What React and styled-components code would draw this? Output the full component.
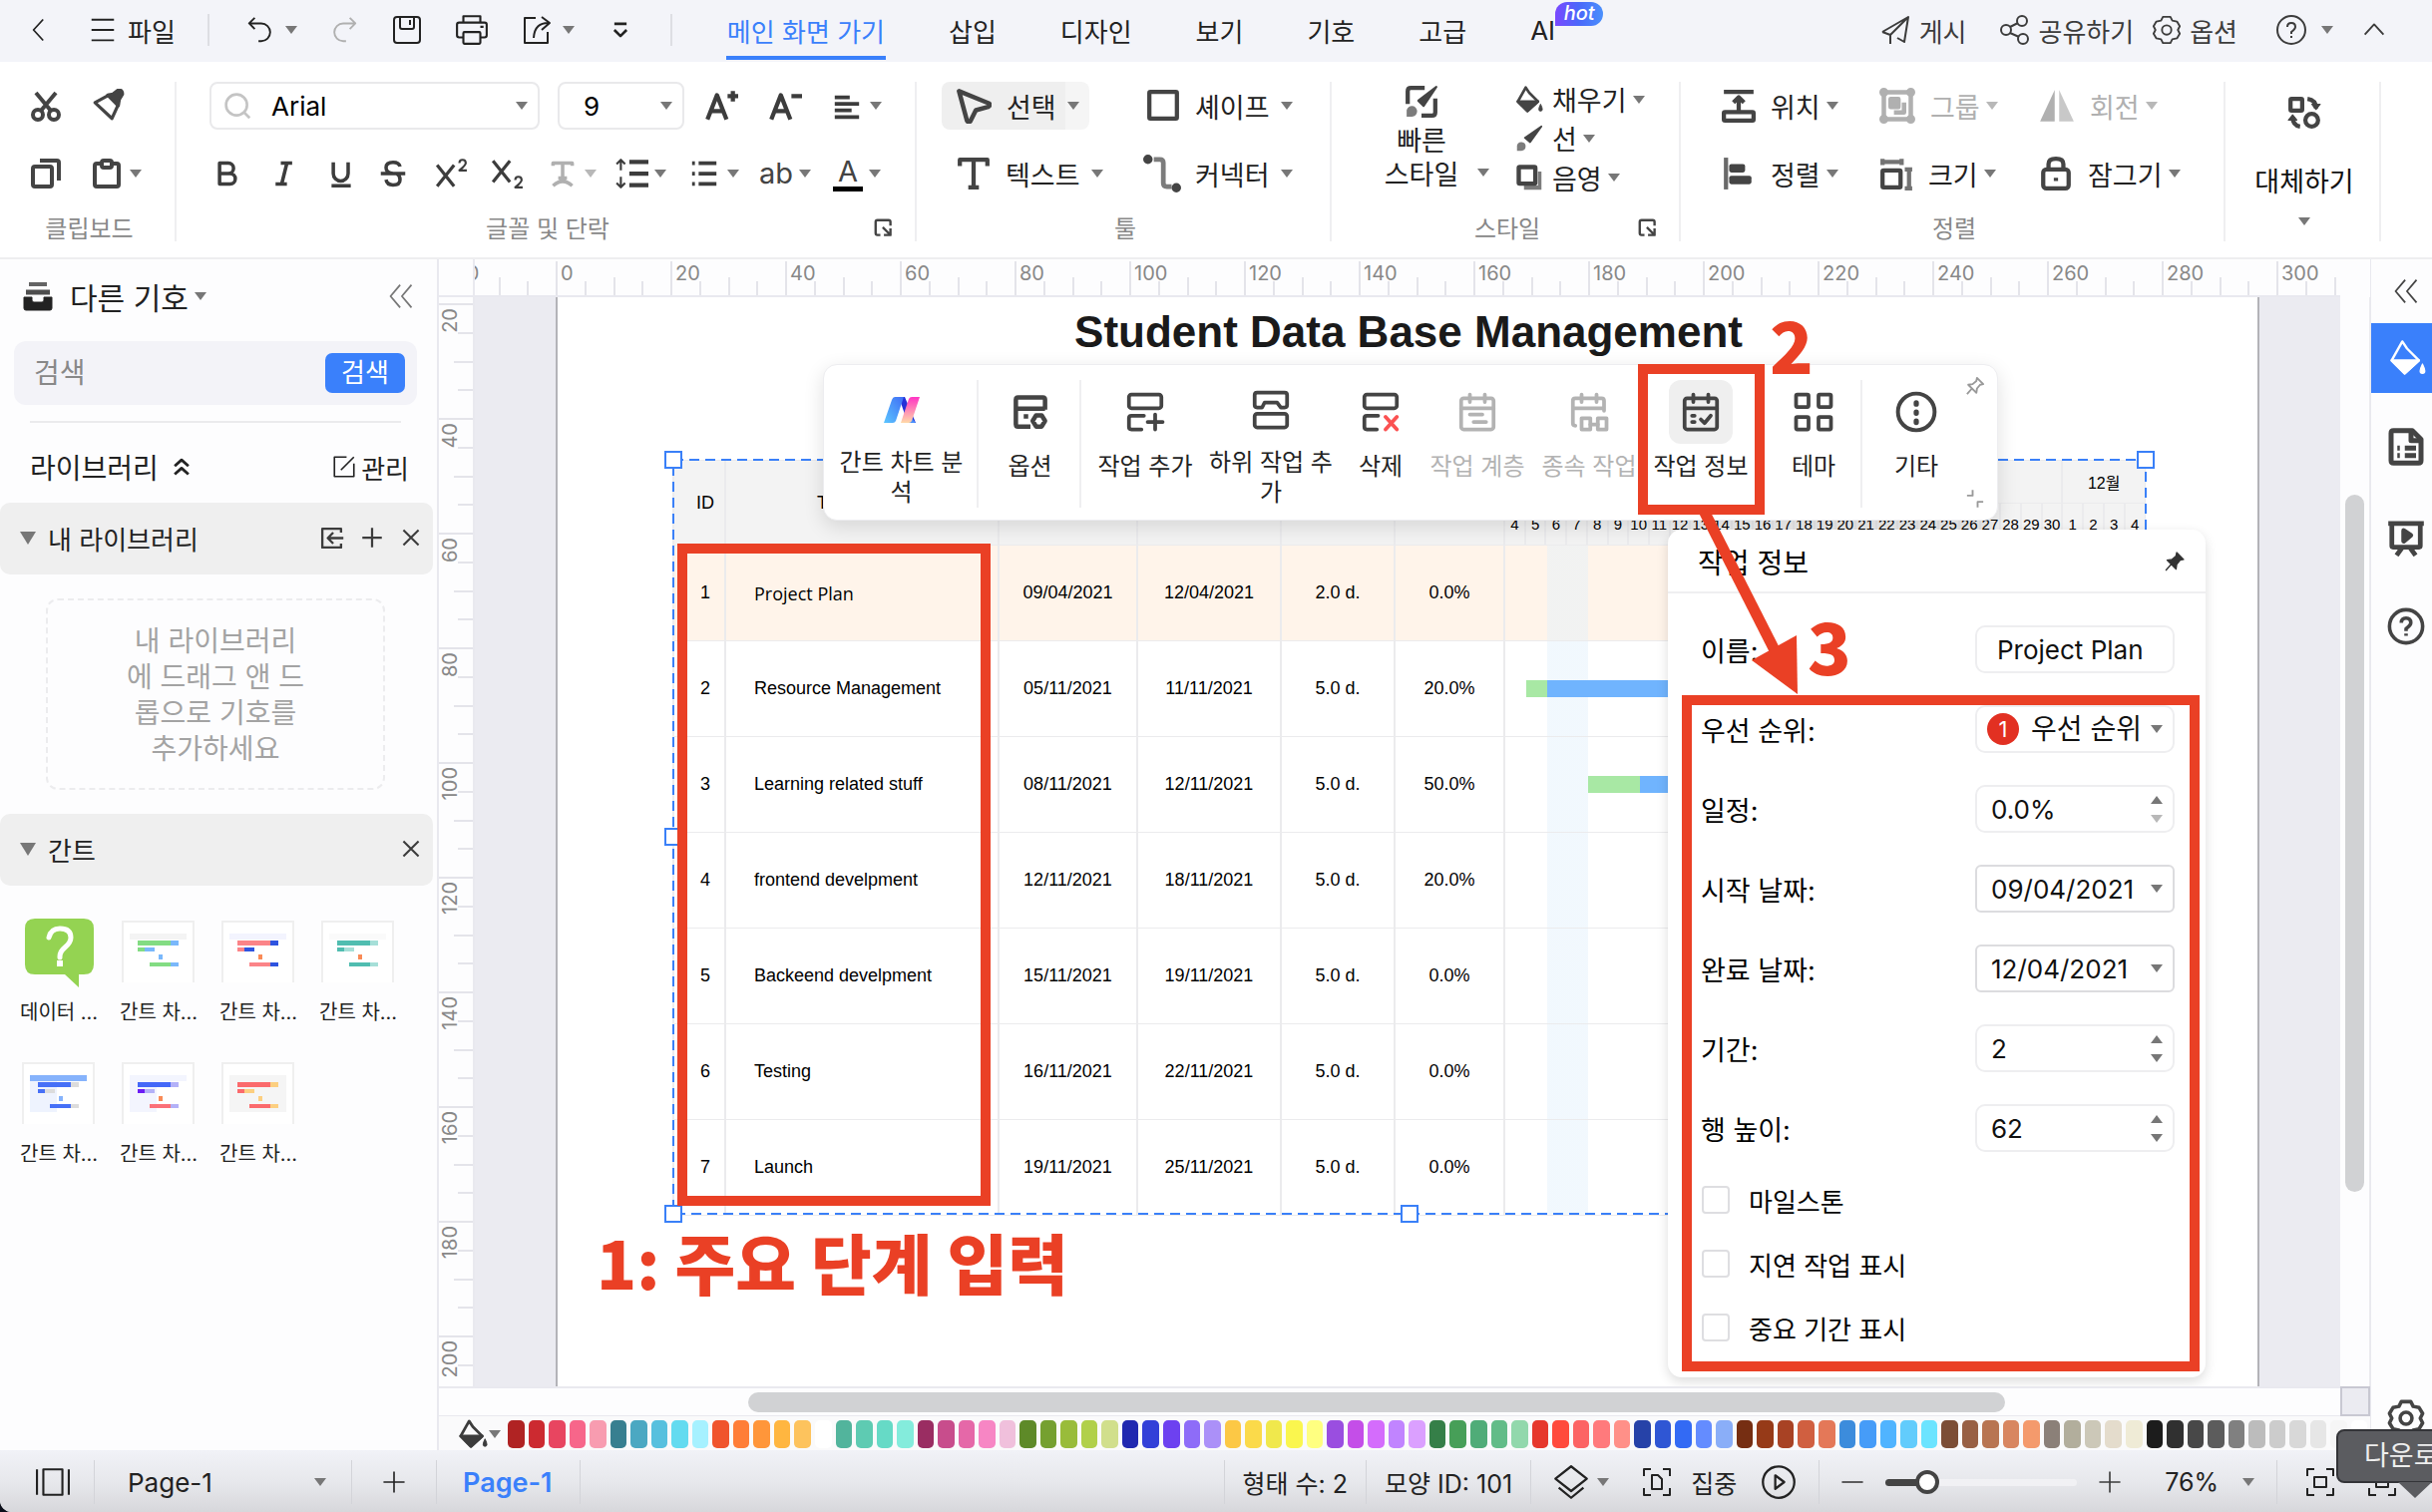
import React, { useState } from "react";
import styled, { createGlobalStyle, css } from "styled-components";

const GlobalStyle = createGlobalStyle`
  * {
    box-sizing: border-box;
  }

  body {
    margin: 0;
    background-color: #0c0e1a;
    font-family: Inter, "Noto Sans CJK KR", sans-serif;
    color: #222;
    overflow: hidden;
  }

  button, input, select {
    margin: 0;
    padding: 0;
    border: none;
    background: none;
    font: inherit;
    color: inherit;
    outline: none;
  }

  select {
    appearance: none;
  }
`;

/* ---------- icons ---------- */

const IconSvg = styled.svg`
  display: block;
  flex: none;
  fill: none;
  stroke: currentColor;
  stroke-linejoin: round;
`;

const iconShapes = {
  back: <path d="M22 4 11 16l11 12" />,
  menu: <path d="M4 5h24M4 16h24M4 27h24" />,
  undo: <path d="M10 3 4 9l6 6M4 9h13a9 9 0 0 1 0 19h-3" />,
  redo: <path d="m22 3 6 6-6 6M28 9H15a9 9 0 0 0 0 19h3" />,
  save: (
    <>
      <rect x="3" y="3" width="26" height="26" rx="3" />
      <path d="M9 3v10q0 2 2 2h10q2 0 2-2V3M19 6v5" />
    </>
  ),
  print: (
    <>
      <path d="M8 9V3h16v6M8 23H4q-2 0-2-2V11q0-2 2-2h24q2 0 2 2v10q0 2-2 2h-4M24 13h3" />
      <rect x="8" y="18" width="16" height="11" rx="1" />
    </>
  ),
  exportTo: <path d="M15 4H4v25h23V18M21 3l8 6-8 7M29 9q-15-1-16 15" />,
  more: <path d="M9 9h14M9 16l7 7 7-7" />,
  send: <path d="M3 18 29 3l-4 25-7-4M3 18l8 3L29 3M11 21v9" />,
  share: (
    <>
      <circle cx="8" cy="16" r="5" />
      <circle cx="24" cy="7" r="5" />
      <circle cx="25" cy="25" r="5" />
      <path d="m12 13 8-4M12 19l9 4" />
    </>
  ),
  gear: (
    <>
      <path d="M12 2h8l2 4 5 1 3 5-2 4 2 4-3 5-5 1-2 4h-8l-2-4-5-1-3-5 2-4-2-4 3-5 5-1z" />
      <circle cx="16" cy="16" r="5" />
    </>
  ),
  help: (
    <>
      <circle cx="16" cy="16" r="14" />
      <path d="M12 13q0-4 4-4t4 4q0 2-4 5v2M16 22v2" />
    </>
  ),
  up: <path d="m6 21 10-11 10 11" />,
  cut: (
    <>
      <circle cx="8" cy="25" r="5" />
      <circle cx="24" cy="25" r="5" />
      <path d="M11 21 26 3M21 21 6 3" />
    </>
  ),
  painter: (
    <>
      <path d="M3 13 16 6l9 9-6 13z" />
      <path d="m15 6 5-1 5-4q4 0 4 4l-3 5-1 6z" fill="currentColor" />
    </>
  ),
  copy: (
    <>
      <rect x="3" y="9" width="19" height="20" rx="2" />
      <path d="M10 3h17q2 0 2 2v18" />
    </>
  ),
  paste: (
    <>
      <path d="M10 6H5q-2 0-2 2v19q0 2 2 2h20q2 0 2-2V8q0-2-2-2h-5" />
      <rect x="10" y="3" width="10" height="7" rx="2" />
    </>
  ),
  search: (
    <>
      <circle cx="15" cy="15" r="12" />
      <path d="m24 24 6 6" />
    </>
  ),
  fontUp: <path d="m3 29 9-23 9 23M6 21h12M27 2v10M22 7h10" />,
  fontDown: <path d="m3 29 9-23 9 23M6 21h12M22 7h10" />,
  alignText: <path d="M3 7h16M3 14h26M3 21h18M3 28h26" />,
  bold: <path d="M7 4h10a6 6 0 0 1 0 12H7zM7 16h12a6 6 0 0 1 0 12H7z" />,
  italic: <path d="M12 4h13M6 28h13M19 4l-6 24" />,
  underline: <path d="M7 3v13a8 8 0 0 0 17 0V3M5 30h22" />,
  strike: <path d="M2 16h28M24 8q-1-5-8-5-8 0-8 6t8 7M8 23q1 6 8 6 8 0 8-6 0-5-4-7" />,
  sup: (
    <>
      <path d="m3 8 16 20M19 8 3 28" />
      <path d="M24 6q0-3 3-3t3 3q0 2-6 7h7" strokeWidth="2" />
    </>
  ),
  sub: (
    <>
      <path d="m3 4 16 20M19 4 3 24" />
      <path d="M24 22q0-3 3-3t3 3q0 2-6 7h7" strokeWidth="2" />
    </>
  ),
  textPath: <path d="M5 7V4h22v3M16 4v17M11 21h10M5 30q11-10 22 0" />,
  lineSpace: (
    <>
      <path d="M6 3v10M2 7l4-4 4 4M6 19v10M2 25l4 4 4-4" strokeWidth="2" />
      <path d="M14 5h18M14 16h18M14 27h18" />
    </>
  ),
  list: <path d="M3 5h3M3 16h3M3 27h3M10 5h19M10 16h19M10 27h19" />,
  launcher: <path d="M11 28H6q-3 0-3-3V6q0-3 3-3h19q3 0 3 3v6M15 15l12 12M28 17v11H17" />,
  pointer: <path d="M3 3 30 14q1 2-1 3l-11 3-5 10q-2 1-3-1z" />,
  text: <path d="M3 9V3h26v6M16 3v26M11 29h10" />,
  shape: <rect x="3" y="3" width="26" height="25" rx="1" />,
  connector: (
    <>
      <path d="M9 4h5q3 0 3 3v17q0 3 3 3h4" opacity="0.7" />
      <circle cx="4" cy="4" r="2" fill="currentColor" />
      <circle cx="28" cy="28" r="2" fill="currentColor" />
    </>
  ),
  quick: (
    <>
      <path d="M3 18V6q0-3 3-3h13M29 13v13q0 3-3 3H16" />
      <path d="M30 2 18 20l-5-5z" fill="currentColor" strokeWidth="2" />
      <path d="M2 30v-6a5 5 0 1 1 5 6z" fill="currentColor" stroke="none" opacity="0.7" />
    </>
  ),
  bucket: (
    <>
      <path d="m12 2 4 6 10 10-12 11L3 18z" />
      <path d="M3 18h23L14 29z" fill="currentColor" />
      <path d="M29 21q4 8 0 8t0-8z" fill="currentColor" strokeWidth="1" />
    </>
  ),
  brush: (
    <>
      <path d="M30 2 17 20l-6-5z" fill="currentColor" strokeWidth="2" />
      <path d="M2 30v-6a5 5 0 1 1 5 6z" fill="currentColor" stroke="none" opacity="0.7" />
    </>
  ),
  shadow: (
    <>
      <path d="M10 25v5h20V9h-4v16z" fill="currentColor" stroke="none" opacity="0.7" />
      <rect x="4" y="4" width="19" height="19" rx="1" />
    </>
  ),
  position: (
    <>
      <path d="M2 3h28M16 21V8M11 13l5-5 5 5" />
      <rect x="2" y="22" width="28" height="8" rx="1" />
    </>
  ),
  group: (
    <>
      <rect x="4" y="4" width="24" height="24" />
      <circle cx="4" cy="4" r="2" fill="#fff" />
      <circle cx="28" cy="4" r="2" fill="#fff" />
      <circle cx="4" cy="28" r="2" fill="#fff" />
      <circle cx="28" cy="28" r="2" fill="#fff" />
      <rect x="10" y="10" width="7" height="7" fill="currentColor" />
      <path d="M22 13v9h-9" />
    </>
  ),
  flip: (
    <>
      <path d="M14 2v28H1z" fill="currentColor" stroke="none" />
      <path d="M18 2v28h13z" fill="currentColor" stroke="none" opacity="0.7" />
    </>
  ),
  alignObj: (
    <>
      <path d="M4 1v30" opacity="0.8" />
      <rect x="9" y="9" width="11" height="4" fill="currentColor" />
      <rect x="9" y="20" width="17" height="4" fill="currentColor" />
    </>
  ),
  size: (
    <>
      <rect x="3" y="13" width="17" height="16" rx="1" />
      <path d="M3 2v6M21 2v6M3 5h18M24 12h7M24 30h7M28 12v18" opacity="0.75" />
    </>
  ),
  lock: (
    <>
      <rect x="4" y="12" width="24" height="18" rx="3" />
      <path d="M9 12V7q0-5 7-5t7 5v5M16 20v3" />
    </>
  ),
  replace: (
    <>
      <rect x="3" y="3" width="11" height="11" rx="1" />
      <circle cx="23" cy="23" r="6" />
      <path d="M19 3q8 1 8 9M5 20q0 8 7 9" />
      <path d="m23 8 4 5 4-5zM1 23l4-5 4 5z" fill="currentColor" strokeWidth="1" />
    </>
  ),
  library: (
    <>
      <path d="M7 4h18" opacity="0.7" strokeWidth="4" />
      <path d="M4 12h24" opacity="0.8" strokeWidth="5" />
      <path d="M2 17h8v3q0 2 2 2h8q2 0 2-2v-3h8v11q0 2-2 2H4q-2 0-2-2z" fill="currentColor" strokeWidth="1" />
    </>
  ),
  collapse: <path d="M15 3 4 16l11 13M28 3 17 16l11 13" />,
  doubleUp: <path d="m6 15 10-9 10 9M6 27l10-9 10 9" />,
  edit: <path d="M19 4H4v24h24V12M12 20 28 4" />,
  importTo: <path d="M28 9V4H4v24h24v-5M31 16H12M18 9l-7 7 7 7" />,
  plus: <path d="M16 3v26M3 16h26" />,
  minus: <path d="M3 16h26" />,
  close: <path d="m5 5 22 22M27 5 5 27" />,
  ganttOption: (
    <>
      <path d="M29 14V5q0-2-2-2H5Q3 3 3 5v22q0 2 2 2h11M3 13h26M10 20h4" />
      <path d="m21 19-3 5 3 5h5l3-5-3-5z" />
    </>
  ),
  taskAdd: (
    <>
      <rect x="3" y="2" width="26" height="11" rx="2" />
      <path d="M15 19H5q-2 0-2 2v7q0 2 2 2h8M24 18v12M18 24h12" />
    </>
  ),
  taskSub: (
    <>
      <path d="M9 14H5q-2 0-2-2V4q0-2 2-2h22q2 0 2 2v8q0 2-2 2h-3l-3-4H11z" />
      <rect x="3" y="19" width="26" height="11" rx="2" />
    </>
  ),
  taskDelete: (
    <>
      <rect x="3" y="2" width="26" height="11" rx="2" />
      <path d="M14 19H5q-2 0-2 2v7q0 2 2 2h8" />
      <path d="m20 20 9 10M29 20l-9 10" stroke="#fb5252" />
    </>
  ),
  calendar: (
    <>
      <rect x="3" y="5" width="26" height="25" rx="2" />
      <path d="M3 13h26M10 2v6M22 2v6M10 18h10M13 24h10" />
    </>
  ),
  calendarLink: (
    <>
      <path d="M28 15V7q0-2-2-2H5Q3 5 3 7v18q0 2 2 2M3 13h25M10 2v6M22 2v6" />
      <rect x="10" y="21" width="7" height="9" />
      <rect x="23" y="21" width="7" height="9" />
      <path d="M17 26h6" />
    </>
  ),
  calendarCheck: (
    <>
      <rect x="3" y="5" width="26" height="25" rx="2" />
      <path d="M3 13h26M10 2v6M22 2v6M9 19h2M9 24h2M16 22l3 3 5-6" />
    </>
  ),
  theme: (
    <>
      <rect x="2" y="2" width="10" height="10" rx="1" />
      <rect x="20" y="2" width="10" height="10" rx="1" />
      <rect x="2" y="20" width="10" height="10" rx="1" />
      <rect x="20" y="20" width="10" height="10" rx="1" />
    </>
  ),
  etc: (
    <>
      <circle cx="16" cy="16" r="14" />
      <path d="M16 9v1M16 16v1M16 23v1" strokeWidth="4" />
    </>
  ),
  pin: <path d="m19 3 10 10-5 1-5 6-1 7L5 14l7-1 6-5zM11 20 3 29" />,
  pinSolid: <path d="m19 3 10 10-5 1-5 6-1 7L5 14l7-1 6-5zM11 20 3 29" fill="currentColor" />,
  corners: <path d="M3 11h9V2M20 30v-9h9" />,
  note: (
    <>
      <path d="M21 3H6Q4 3 4 5v22q0 2 2 2h20q2 0 2-2V10z" />
      <path d="M20 3v8h8M9 17h2M15 17h9M9 23h2M15 23h9" />
    </>
  ),
  board: (
    <>
      <path d="M1 4h30M4 4v19q0 1 1 1h22q1 0 1-1V4M13 24l-5 7M19 24l5 7" />
      <path d="m14 10 6 4-6 5z" fill="currentColor" />
    </>
  ),
  pageView: <path d="M7 4h18v24H7zM1 4v24M31 4v24" />,
  layers: <path d="m16 2 14 11-14 11L2 13zM5 21l11 9 11-9" />,
  focus: <path d="M10 3H3v7M22 3h7v7M10 29H3v-7M22 29h7v-7M11 9h6l4 4v10H11z" />,
  play: (
    <>
      <circle cx="16" cy="16" r="14" />
      <path d="m13 10 8 6-8 6z" />
    </>
  ),
  fit: (
    <>
      <path d="M10 3H3v7M22 3h7v7M10 29H3v-7M22 29h7v-7" />
      <rect x="10" y="11" width="12" height="10" />
    </>
  ),
};

const Icon = ({ name, size = 30, weight = 2, cap }) => (
  <IconSvg
    width={size}
    height={size}
    viewBox="0 0 32 32"
    strokeWidth={weight}
    strokeLinecap={cap}
    aria-hidden="true"
  >
    {iconShapes[name]}
  </IconSvg>
);

const Caret = styled.i`
  flex: none;
  width: 0;
  height: 0;
  border: 6px solid transparent;
  border-top: 8px solid #777;
  border-bottom: none;
`;

const Spacer = styled.div`
  flex: 1;
`;

/* ---------- window ---------- */

const Window = styled.div`
  display: flex;
  flex-direction: column;
  height: 100vh;
  overflow: hidden;
  background-color: #fdfdfe;
  border-bottom-left-radius: 12px;
`;

const IconButton = styled.button`
  display: flex;
  align-items: center;
  gap: ${({ $gap }) => $gap || 8}px;
  color: ${({ $color }) => $color || "#3c3c3c"};
  white-space: nowrap;

  ${({ disabled }) =>
    disabled &&
    css`
      color: #b0b0b0;

      ${Caret} {
        border-top-color: #b8b8b8;
      }
    `}
`;

/* ---------- top bar ---------- */

const TopBar = styled.header`
  display: flex;
  align-items: center;
  flex: none;
  height: 62px;
  padding: 0 43px 2px 24px;
  background-color: #f3f4f9;
  font-size: 26px;
`;

const Divider = styled.i`
  flex: none;
  width: 2px;
  height: ${({ $h }) => $h || 32}px;
  background-color: #dddee3;
`;

const FileTools = styled.div`
  display: flex;
  align-items: center;
  height: 32px;
  gap: 32px;
  padding: 0 36px 0 36px;
`;

const FileMenu = styled.div`
  display: flex;
  gap: 36px;
  padding-right: 32px;
`;

const Tabs = styled.nav`
  display: flex;
  gap: 62px;
  height: 60px;
  padding-left: 54px;
`;

const Tab = styled.a`
  position: relative;
  display: flex;
  align-items: center;
  height: 60px;
  padding: 0 1px;
  border-top: 4px solid transparent;
  border-bottom: 4px solid ${({ $on }) => ($on ? "#3a80fb" : "transparent")};
  color: ${({ $on }) => ($on ? "#3a80fb" : "#222")};
  text-decoration: none;
`;

const HotBadge = styled.span`
  position: absolute;
  left: 26px;
  top: -2px;
  width: 48px;
  height: 24px;
  border-radius: 12px 12px 12px 0;
  background: linear-gradient(90deg, #7a48ff, #4a68fa 50%, #4a90fc);
  color: #fff;
  font-size: 20px;
  font-style: italic;
  font-weight: 500;
  line-height: 23px;
  text-align: center;
`;

const TopActions = styled.div`
  display: flex;
  align-items: center;
  gap: 18px;

  > :first-child {
    margin-right: 14px;
  }

  > :nth-child(4) {
    margin-left: 20px;
    margin-right: 8px;
  }
`;

const tabs = ["메인 화면 가기", "삽입", "디자인", "보기", "기호", "고급"];

const Header = () => (
  <TopBar>
    <FileMenu>
      <IconButton aria-label="뒤로" $color="#222">
        <Icon name="back" size={28} />
      </IconButton>
      <IconButton $color="#222" $gap={10}>
        <Icon name="menu" size={30} />
        파일
      </IconButton>
    </FileMenu>
    <Divider />
    <FileTools>
      <IconButton aria-label="실행 취소" $color="#222" $gap={10}>
        <Icon name="undo" />
        <Caret />
      </IconButton>
      <IconButton aria-label="다시 실행" disabled>
        <Icon name="redo" />
      </IconButton>
      <IconButton aria-label="저장" $color="#222">
        <Icon name="save" size={32} />
      </IconButton>
      <IconButton aria-label="인쇄" $color="#222">
        <Icon name="print" size={34} />
      </IconButton>
      <IconButton aria-label="내보내기" $color="#222" $gap={10}>
        <Icon name="exportTo" size={32} />
        <Caret />
      </IconButton>
      <IconButton aria-label="더 보기" $color="#222">
        <Icon name="more" size={28} weight={3} />
      </IconButton>
    </FileTools>
    <Divider />
    <Tabs>
      {tabs.map((tab, i) => (
        <Tab key={tab} href="#" $on={i === 0}>
          {tab}
        </Tab>
      ))}
      <Tab href="#">
        AI<HotBadge>hot</HotBadge>
      </Tab>
    </Tabs>
    <Spacer />
    <TopActions>
      <IconButton>
        <Icon name="send" size={32} />
        게시
      </IconButton>
      <IconButton>
        <Icon name="share" size={32} />
        공유하기
      </IconButton>
      <IconButton>
        <Icon name="gear" size={30} />
        옵션
      </IconButton>
      <IconButton aria-label="도움말" $gap={14}>
        <Icon name="help" size={32} />
        <Caret />
      </IconButton>
      <IconButton aria-label="리본 접기">
        <Icon name="up" size={30} />
      </IconButton>
    </TopActions>
  </TopBar>
);

/* ---------- ribbon ---------- */

const RibbonBar = styled.section`
  display: flex;
  flex: none;
  height: 198px;
  padding-top: 20px;
  background-color: #fff;
  border-bottom: 2px solid #eeeef0;
`;

const Group = styled.div`
  display: flex;
  flex-direction: column;
  flex: none;
  width: ${({ $w }) => $w}px;
  height: 160px;
  border-right: 2px solid #efeff1;
`;

const GroupRows = styled.div`
  display: grid;
  grid-template-rows: 48px 48px;
  row-gap: 20px;
  grid-template-columns: ${({ $cols }) => $cols || "1fr"};
  padding-left: ${({ $pad }) => $pad}px;
  font-size: 27px;
`;

const GroupLabel = styled.div`
  position: relative;
  height: 44px;
  padding: 10px 0 0 4px;
  line-height: 44px;
  text-align: center;
  font-size: 24px;
  color: #888;
`;

const Launcher = styled.button`
  position: absolute;
  right: 22px;
  top: 21px;
  color: #444;
`;

const Tool = styled(IconButton)`
  justify-self: start;
  height: 48px;
  gap: ${({ $gap }) => $gap || 6}px;
  color: #222;
  padding: 0 ${({ $px }) => $px || 0}px;

  svg {
    color: #444;
  }

  ${({ disabled }) =>
    disabled &&
    css`
      color: #b0b0b0;

      svg {
        color: #b0b0b0;
      }
    `}

  ${({ $active }) =>
    $active &&
    css`
      padding-right: 10px;
      border-radius: 8px;
      background: linear-gradient(90deg, #efefef 124px, #f5f5f5 124px);
    `}
`;

const ToolLabel = styled.span`
  padding-left: ${({ $left }) => $left || 9}px;
`;

const FontRow = styled.div`
  display: flex;
  align-items: center;
  gap: 18px;
`;

const FormatRow = styled.div`
  display: grid;
  grid-template-columns: 57px 57px 52px 55px 56px 59px 66px 75px 70px 74px 60px;
  align-items: center;
  padding-left: 4px;
`;

const SelectBox = styled.label`
  display: flex;
  align-items: center;
  gap: 20px;
  width: ${({ $w }) => $w}px;
  height: 48px;
  padding: 0 10px ${({ $w }) => ($w > 200 ? "0 12px" : "0 24px")};
  border: 2px solid #e9e9eb;
  border-radius: 8px;
  font-size: 26px;
  color: #000;

  select {
    flex: 1;
    min-width: 0;
  }

  > svg {
    color: #c4c4c4;
  }
`;

const FontButton = styled(IconButton)`
  width: ${({ $w }) => $w || 46}px;
  padding-left: 2px;
`;

const Letters = styled.span`
  font-size: 29px;
  line-height: 32px;
  color: #444;
  ${({ $bar }) => $bar && "border-bottom: 5px solid #000; padding: 0 5px; line-height: 30px;"}
`;

const QuickStyle = styled.button`
  grid-row: 1 / 3;
  display: grid;
  grid-template-columns: 76px 12px;
  grid-template-rows: 40px 34px 34px;
  column-gap: 18px;
  align-items: center;
  align-content: start;
  justify-content: start;
  justify-items: center;
  color: #222;

  svg {
    color: #444;
  }

  span:nth-of-type(1) {
    grid-row: 2;
  }

  span:nth-of-type(2) {
    grid-row: 3;
  }

  ${Caret} {
    grid-row: 3;
    grid-column: 2;
  }
`;

const StyleList = styled.div`
  grid-row: 1 / 3;
  display: flex;
  flex-direction: column;
  margin-top: -2px;

  button {
    height: 40px;
  }
`;

const ReplaceButton = styled.button`
  display: flex;
  flex-direction: column;
  align-items: center;
  gap: 33px;
  padding: 14px 0 0 4px;
  font-size: 27px;
  color: #111;
  line-height: 40px;

  svg {
    color: #444;
  }

  ${Caret} {
    margin-top: -18px;
  }
`;

const Ribbon = () => (
  <RibbonBar>
    <Group $w={177}>
      <GroupRows $pad={30} $cols="62px 1fr">
        <Tool aria-label="잘라내기">
          <Icon name="cut" size={32} weight={4} />
        </Tool>
        <Tool aria-label="서식 복사">
          <Icon name="painter" size={34} weight={3} />
        </Tool>
        <Tool aria-label="복사">
          <Icon name="copy" size={32} weight={4} />
        </Tool>
        <Tool aria-label="붙여넣기">
          <Icon name="paste" size={32} weight={4} />
          <Caret />
        </Tool>
      </GroupRows>
      <GroupLabel>클립보드</GroupLabel>
    </Group>

    <Group $w={742}>
      <GroupRows $pad={33}>
        <FontRow>
          <SelectBox $w={331}>
            <Icon name="search" size={28} weight={3} />
            <select aria-label="글꼴">
              <option>Arial</option>
            </select>
            <Caret />
          </SelectBox>
          <SelectBox $w={127}>
            <select aria-label="글꼴 크기">
              <option>9</option>
            </select>
            <Caret />
          </SelectBox>
          <FontButton aria-label="글꼴 크게">
            <Icon name="fontUp" size={34} weight={4} />
          </FontButton>
          <FontButton aria-label="글꼴 작게">
            <Icon name="fontDown" size={34} weight={4} />
          </FontButton>
          <FontButton aria-label="맞춤" $w={60}>
            <Icon name="alignText" size={30} weight={4} />
            <Caret />
          </FontButton>
        </FontRow>
        <FormatRow>
          {["bold", "italic", "underline", "strike"].map((name) => (
            <IconButton key={name} aria-label={name}>
              <Icon name={name} size={28} weight={4} />
            </IconButton>
          ))}
          <IconButton aria-label="위 첨자">
            <Icon name="sup" size={34} weight={3} />
          </IconButton>
          <IconButton aria-label="아래 첨자">
            <Icon name="sub" size={34} weight={3} />
          </IconButton>
          <IconButton aria-label="곡선 텍스트" disabled>
            <Icon name="textPath" size={28} weight={4} />
            <Caret />
          </IconButton>
          <IconButton aria-label="줄 간격" $gap={6}>
            <Icon name="lineSpace" size={34} weight={4} />
            <Caret />
          </IconButton>
          <IconButton aria-label="목록">
            <Icon name="list" size={30} weight={4} />
            <Caret />
          </IconButton>
          <IconButton $gap={6}>
            <Letters>ab</Letters>
            <Caret />
          </IconButton>
          <IconButton $gap={6}>
            <Letters $bar>A</Letters>
            <Caret />
          </IconButton>
        </FormatRow>
      </GroupRows>
      <GroupLabel>
        글꼴 및 단락
        <Launcher aria-label="글꼴 설정">
          <Icon name="launcher" size={19} weight={4} />
        </Launcher>
      </GroupLabel>
    </Group>

    <Group $w={416}>
      <GroupRows $pad={25} $cols="190px 1fr">
        <Tool $px={14} $gap={11} $active>
          <Icon name="pointer" size={36} weight={4} />
          <ToolLabel $left={4}>선택</ToolLabel>
          <Caret />
        </Tool>
        <Tool $px={15} $gap={11}>
          <Icon name="shape" size={34} weight={4} />
          <ToolLabel $left={4}>셰이프</ToolLabel>
          <Caret />
        </Tool>
        <Tool $px={15} $gap={11}>
          <Icon name="text" size={34} weight={4} />
          <ToolLabel $left={4}>텍스트</ToolLabel>
          <Caret />
        </Tool>
        <Tool $px={12} $gap={11}>
          <Icon name="connector" size={38} weight={4} />
          <ToolLabel $left={3}>커넥터</ToolLabel>
          <Caret />
        </Tool>
      </GroupRows>
      <GroupLabel>툴</GroupLabel>
    </Group>

    <Group $w={350}>
      <GroupRows $pad={52} $cols="132px 1fr">
        <QuickStyle>
          <Icon name="quick" size={34} weight={4} />
          <span>빠른</span>
          <span>스타일</span>
          <Caret />
        </QuickStyle>
        <StyleList>
          <Tool>
            <Icon name="bucket" size={28} weight={3} />
            <ToolLabel $left={3}>채우기</ToolLabel>
            <Caret />
          </Tool>
          <Tool>
            <Icon name="brush" size={28} weight={3} />
            <ToolLabel $left={3}>선</ToolLabel>
            <Caret />
          </Tool>
          <Tool>
            <Icon name="shadow" size={28} weight={5} />
            <ToolLabel $left={3}>음영</ToolLabel>
            <Caret />
          </Tool>
        </StyleList>
      </GroupRows>
      <GroupLabel>
        스타일
        <Launcher aria-label="스타일 설정">
          <Icon name="launcher" size={19} weight={4} />
        </Launcher>
      </GroupLabel>
    </Group>

    <Group $w={546}>
      <GroupRows $pad={41} $cols="158px 160px 1fr">
        <Tool>
          <Icon name="position" size={34} weight={4} />
          <ToolLabel>위치</ToolLabel>
          <Caret />
        </Tool>
        <Tool disabled>
          <Icon name="group" size={36} weight={4} />
          <ToolLabel>그룹</ToolLabel>
          <Caret />
        </Tool>
        <Tool disabled>
          <Icon name="flip" size={36} />
          <ToolLabel>회전</ToolLabel>
          <Caret />
        </Tool>
        <Tool>
          <Icon name="alignObj" size={34} weight={4} />
          <ToolLabel>정렬</ToolLabel>
          <Caret />
        </Tool>
        <Tool>
          <Icon name="size" size={34} weight={4} />
          <ToolLabel>크기</ToolLabel>
          <Caret />
        </Tool>
        <Tool>
          <Icon name="lock" size={34} weight={4} />
          <ToolLabel>잠그기</ToolLabel>
          <Caret />
        </Tool>
      </GroupRows>
      <GroupLabel>정렬</GroupLabel>
    </Group>

    <Group $w={156}>
      <ReplaceButton>
        <Icon name="replace" size={34} weight={4} />
        대체하기
        <Caret />
      </ReplaceButton>
    </Group>
  </RibbonBar>
);

/* ---------- symbol panel ---------- */

const Main = styled.main`
  display: flex;
  flex: 1;
  min-height: 0;
`;

const SidePanel = styled.aside`
  flex: none;
  width: 440px;
  border-right: 2px solid #e9e9ef;
  background-color: #fdfdfe;
`;

const PanelHead = styled.div`
  display: flex;
  align-items: center;
  height: 74px;
  padding: 0 22px;
  font-size: 30px;
`;

const PanelTitle = styled(IconButton)`
  flex: 1;
  color: #222;
  gap: 6px;

  span {
    padding-left: 10px;
  }
`;

const SearchBox = styled.form`
  display: flex;
  align-items: center;
  height: 64px;
  margin: 8px 20px 0 14px;
  padding: 0 12px 0 20px;
  border-radius: 12px;
  background-color: #f3f3f8;

  input {
    flex: 1;
    min-width: 0;
    font-size: 28px;
  }

  input::placeholder {
    color: #888;
  }

  button {
    width: 80px;
    height: 40px;
    border-radius: 7px;
    background-color: #3a80fb;
    color: #fff;
    font-size: 26px;
    line-height: 38px;
  }
`;

const LibraryHead = styled.div`
  display: flex;
  align-items: center;
  justify-content: space-between;
  height: 82px;
  margin: 16px 36px 0 30px;
  padding-top: 8px;
  border-top: 2px solid #ebebed;
  font-size: 28px;

  button:last-child {
    margin-right: -8px;
    font-size: 26px;
  }
`;

const SectionBar = styled.div`
  display: flex;
  align-items: center;
  gap: 16px;
  height: 72px;
  margin-right: 4px;
  padding: 0 11px 2px 20px;
  border-radius: 10px;
  background-color: #efefef;
  font-size: 26px;
`;

const SectionName = styled.button`
  display: flex;
  align-items: center;
  gap: 12px;
  flex: 1;

  ${Caret} {
    border-width: 8px;
    border-top-width: 13px;
    border-bottom: none;
  }
`;

const DropHint = styled.p`
  display: flex;
  align-items: center;
  justify-content: center;
  height: 192px;
  margin: 24px 52px 24px 46px;
  padding: 2px 76px 0;
  border: 2px dashed #ececee;
  border-radius: 12px;
  color: #a3a3a3;
  font-size: 28px;
  line-height: 36px;
  text-align: center;
  word-break: break-all;
`;

const SymbolGrid = styled.div`
  display: grid;
  grid-template-columns: repeat(4, 76px);
  column-gap: 24px;
  row-gap: 42px;
  padding: 32px 20px;
`;

const Symbol = styled.figure`
  margin: 0;
  height: 100px;
  font-size: 20px;

  svg {
    display: block;
    width: 76px;
    height: 72px;
  }

  figcaption {
    height: 28px;
    line-height: 46px;
    white-space: nowrap;
  }
`;

const symbols = [
  null,
  { head: "#f4f4f4", done: "#83dc83", rest: "#7ab8fb", dot: "#7ab8fb" },
  { head: "#f3f4fe", done: "#fb8488", rest: "#2e54e0", dot: "#f98b57" },
  { head: "#fafafa", done: "#50bdb0", rest: "#a6dfd8", dot: "#f98b57" },
  { head: "#86b3fc", side: "#eef3fe", done: "#4670f7", rest: "#dcdcdc", dot: "#86b3fc" },
  { head: "#f3f5fe", side: "#f3f5fe", done: "#4468f8", rest: "#b3b1f8", alt: "#6c1cf5", last: "#fb7078", dot: "#f98b57" },
  { head: "#f5f5f5", side: "#f5f5f5", done: "#fb6a6c", rest: "#fccf80", dot: "#fccf80" },
];

const GanttThumb = ({ head, side, done, rest, alt, last, dot }) => (
  <svg viewBox="0 0 76 72" aria-hidden="true">
    <path d="M3 65V4h71v61" fill="#fff" stroke="#efefef" strokeWidth="2" />
    {side && <rect x="10" y="22" width={head === side && !alt ? 57 : 27} height="31" fill={side} />}
    <rect x="10" y="16" width="57" height="6" fill={head} />
    <rect x="18" y="23" width="33" height="5" fill={done} />
    <rect x="51" y="23" width="8" height="5" fill={rest} />
    <rect x="18" y="30" width="7" height="4" fill={alt || done} />
    <rect x="25" y="30" width="10" height="4" fill={rest} />
    <rect x="39" y="37" width="4" height="5" fill={dot} />
    <rect x="30" y="45" width="21" height="4" fill={last || done} />
    <rect x="51" y="45" width="8" height="4" fill={rest} />
  </svg>
);

const QuestionThumb = () => (
  <svg viewBox="0 0 76 72" aria-hidden="true">
    <path
      d="M15 1h49q10 0 10 10v36q0 10-10 10h-5v13L45 57H15Q5 57 5 47V11Q5 1 15 1z"
      fill="#94d352"
    />
    <path
      d="M29 20q2-9 11-9 11 0 11 9 0 5-6 10-5 4-5 9v1"
      fill="none"
      stroke="#fff"
      strokeWidth="5"
      strokeLinecap="round"
    />
    <rect x="37" y="43" width="6" height="6" fill="#fff" />
  </svg>
);

const SymbolPanel = () => (
  <SidePanel>
    <PanelHead>
      <PanelTitle>
        <Icon name="library" size={32} weight={3} />
        <span>다른 기호</span>
        <Caret />
      </PanelTitle>
      <IconButton aria-label="패널 접기" $color="#777">
        <Icon name="collapse" size={28} />
      </IconButton>
    </PanelHead>
    <SearchBox>
      <input aria-label="기호 검색" placeholder="검색" />
      <button type="button">검색</button>
    </SearchBox>
    <LibraryHead>
      <IconButton $color="#222" $gap={12}>
        라이브러리
        <Icon name="doubleUp" size={22} weight={4} />
      </IconButton>
      <IconButton $color="#222" $gap={4}>
        <Icon name="edit" size={26} />
        관리
      </IconButton>
    </LibraryHead>
    <SectionBar>
      <SectionName>
        <Caret />내 라이브러리
      </SectionName>
      <IconButton aria-label="가져오기">
        <Icon name="importTo" size={25} weight={3} />
      </IconButton>
      <IconButton aria-label="추가">
        <Icon name="plus" size={24} weight={3} />
      </IconButton>
      <IconButton aria-label="닫기">
        <Icon name="close" size={22} weight={3} />
      </IconButton>
    </SectionBar>
    <DropHint>내 라이브러리에 드래그 앤 드롭으로 기호를 추가하세요</DropHint>
    <SectionBar>
      <SectionName>
        <Caret />
        간트
      </SectionName>
      <IconButton aria-label="닫기">
        <Icon name="close" size={22} weight={3} />
      </IconButton>
    </SectionBar>
    <SymbolGrid>
      {symbols.map((symbol, i) => (
        <Symbol key={i}>
          {symbol ? <GanttThumb {...symbol} /> : <QuestionThumb />}
          <figcaption>{symbol ? "간트 차..." : "데이터 ..."}</figcaption>
        </Symbol>
      ))}
    </SymbolGrid>
  </SidePanel>
);

/* ---------- rulers ---------- */

const Workspace = styled.section`
  display: grid;
  flex: 1;
  min-width: 0;
  grid-template-columns: 36px 1fr 30px;
  grid-template-rows: 38px 1fr 30px 34px;
`;

const RulerCorner = styled.div`
  border-right: 2px solid #e9e9ef;
  border-bottom: 2px solid #e9e9ef;
`;

const TopRuler = styled.div`
  display: flex;
  overflow: hidden;
  padding-top: 2px;
  border-bottom: 2px solid #e9e9ef;
`;

const TopMark = styled.div`
  display: flex;
  align-items: flex-end;
  justify-content: space-between;
  flex: none;
  width: 115px;
  border-left: 2px solid #e4e4ea;
  padding: 0 27px;
  position: relative;

  &:first-child {
    margin-left: -34px;
  }

  span {
    position: absolute;
    left: 3px;
    top: -1px;
    font-size: 20px;
    line-height: 26px;
    color: #888;
  }

  i {
    width: 2px;
    height: 14px;
    background-color: #e4e4ea;
  }

  i:nth-of-type(2) {
    height: 18px;
  }
`;

const LeftRuler = styled.div`
  overflow: hidden;
  padding-top: 6px;
  border-right: 2px solid #e9e9ef;
`;

const LeftMark = styled.div`
  display: flex;
  flex-direction: column;
  align-items: flex-end;
  justify-content: space-between;
  height: 115px;
  border-top: 2px solid #e4e4ea;
  padding: 27px 0;
  position: relative;

  span {
    position: absolute;
    left: 0;
    top: 3px;
    writing-mode: vertical-rl;
    transform: rotate(180deg);
    font-size: 20px;
    line-height: 22px;
    color: #888;
  }

  i {
    width: 15px;
    height: 2px;
    background-color: #e4e4ea;
  }

  i:nth-of-type(2) {
    width: 19px;
  }
`;

const range = (from, to) => Array.from({ length: to - from + 1 }, (_, i) => from + i);

/* ---------- drawing area ---------- */

const Canvas = styled.div`
  position: relative;
  overflow: hidden;
  padding-left: 81px;
  background-color: #ebebf1;
`;

const Sheet = styled.div`
  width: 1708px;
  height: 100%;
  padding: 6px 0 0 2px;
  border: 2px solid #b3b3b8;
  border-width: 0 2px;
  background-color: #fff;
`;

const SheetTitle = styled.h1`
  margin: 0;
  font: bold 44px/58px "Liberation Sans", Arial, sans-serif;
  color: #1a1a1a;
  text-align: center;
`;

const GanttChart = styled.table`
  position: absolute;
  left: 198px;
  top: 163px;
  width: 1477px;
  table-layout: fixed;
  border-collapse: collapse;
  background-color: #fff;
  font: 18px "Liberation Sans", "Noto Sans CJK KR", sans-serif;
  color: #000;
  text-align: center;

  th, td {
    padding: 0;
    border: 1px solid #ebebed;
    border-left-width: 2px;
    font-weight: normal;
  }

  th:first-child[rowspan], td:first-child {
    padding-left: 12px;
  }

  thead {
    background-color: #f3f3f3;
  }

  thead tr:first-child {
    height: 43px;
    font-size: 16px;
  }

  thead tr:first-child th[rowspan] {
    font-size: 18px;
  }

  thead tr:last-child {
    height: 42px;
    font-size: 15px;
  }

  tbody tr {
    height: 96px;
  }

  tbody tr:first-child {
    background-color: #fff4ea;
  }
`;

const NameCell = styled.td`
  && {
    padding-left: 28px;
  }
  text-align: left;
  ${({ $plain }) => !$plain && 'font-family: "Open Sans", sans-serif; font-weight: 500 !important;'}
`;

const TimelineCell = styled.td`
  background: linear-gradient(
      90deg,
      transparent 42px,
      rgba(225, 240, 252, 0.45) 42px,
      rgba(225, 240, 252, 0.45) 83px,
      transparent 83px
    )
    0 0 / 145px 100% repeat-x;
`;

const TaskBar = styled.div`
  height: 17px;
  background-color: #70b4fe;

  i {
    display: block;
    height: 100%;
    background-color: #a8e8a4;
  }
`;

const SelectionFrame = styled.svg`
  position: absolute;
  left: 189px;
  top: 153px;
  fill: #fff;
  stroke: #3a80f8;
  stroke-width: 2;
`;

const tasks = [
  { name: "Project Plan", start: "09/04/2021", end: "12/04/2021", days: "2.0 d.", done: "0.0%" },
  { name: "Resource Management", start: "05/11/2021", end: "11/11/2021", days: "5.0 d.", done: "20.0%", bar: [21, 145, 21] },
  { name: "Learning related stuff", start: "08/11/2021", end: "12/11/2021", days: "5.0 d.", done: "50.0%", bar: [83, 104, 52] },
  { name: "frontend develpment", start: "12/11/2021", end: "18/11/2021", days: "5.0 d.", done: "20.0%" },
  { name: "Backeend develpment", start: "15/11/2021", end: "19/11/2021", days: "5.0 d.", done: "0.0%" },
  { name: "Testing", start: "16/11/2021", end: "22/11/2021", days: "5.0 d.", done: "0.0%" },
  { name: "Launch", start: "19/11/2021", end: "25/11/2021", days: "5.0 d.", done: "0.0%" },
];

const dayNumbers = [...range(4, 30), ...range(1, 4)];

const Gantt = () => (
  <GanttChart>
    <colgroup>
      <col width="52" />
      <col width="274" />
      <col width="139" />
      <col width="144" />
      <col width="114" />
      <col width="110" />
      {dayNumbers.map((_, i) => (
        <col key={i} />
      ))}
    </colgroup>
    <thead>
      <tr>
        <th rowSpan="2">ID</th>
        <th rowSpan="2">Task Name</th>
        <th rowSpan="2" />
        <th rowSpan="2" />
        <th rowSpan="2" />
        <th rowSpan="2" />
        <th colSpan="27" />
        <th colSpan="4">12월</th>
      </tr>
      <tr>
        {dayNumbers.map((day, i) => (
          <th key={i}>{day}</th>
        ))}
      </tr>
    </thead>
    <tbody>
      {tasks.map((task, i) => (
        <tr key={task.name}>
          <td>{i + 1}</td>
          <NameCell $plain={i > 0}>{task.name}</NameCell>
          <td>{task.start}</td>
          <td>{task.end}</td>
          <td>{task.days}</td>
          <td>{task.done}</td>
          <TimelineCell colSpan="31">
            {task.bar && (
              <TaskBar style={{ marginLeft: task.bar[0], width: task.bar[1] }}>
                <i style={{ width: task.bar[2] }} />
              </TaskBar>
            )}
          </TimelineCell>
        </tr>
      ))}
    </tbody>
  </GanttChart>
);

const handles = [
  [10, 10],
  [1486, 10],
  [10, 388],
  [10, 766],
  [748, 766],
];

/* ---------- floating toolbar ---------- */

const FloatBar = styled.div`
  position: absolute;
  left: 349px;
  top: 67px;
  display: flex;
  width: 1178px;
  height: 157px;
  padding-top: 15px;
  border: 1px solid #ededf0;
  border-radius: 14px;
  background-color: #fff;
  box-shadow: 0 6px 20px rgba(0, 0, 0, 0.12);
`;

const FloatSection = styled.div`
  display: flex;
  justify-content: ${({ $start }) => ($start ? "flex-start" : "center")};
  width: ${({ $w }) => $w}px;
  height: 128px;
  padding-left: 2px;
  border-right: ${({ $last }) => ($last ? 0 : 2)}px solid #efeff1;
`;

const FloatItem = styled.button`
  display: flex;
  flex-direction: column;
  align-items: center;
  flex: none;
  width: ${({ $w }) => $w}px;
  font-size: 24px;
  line-height: 30px;
  color: ${({ disabled }) => (disabled ? "#b3b3b3" : "#222")};
  word-break: break-all;

  > i {
    display: flex;
    align-items: center;
    justify-content: center;
    width: 64px;
    height: 64px;
    margin-bottom: 8px;
    border-radius: 12px;
    color: ${({ disabled }) => (disabled ? "#b3b3b3" : "#444")};
    background-color: ${({ $on }) => ($on ? "#efefef" : "transparent")};
  }

  span {
    width: ${({ $w }) => Math.min($w, 124)}px;
  }
`;

const FloatPin = styled.button`
  position: absolute;
  right: 12px;
  top: ${({ $bottom }) => ($bottom ? 124 : 11)}px;
  color: #999;
`;

const Logo = () => (
  <svg width="38" height="28" viewBox="0 0 38 28" aria-hidden="true">
    <defs>
      <linearGradient id="logoBlue" x1="0" y1="1" x2="1" y2="0">
        <stop offset="0" stopColor="#5cc6ff" />
        <stop offset="1" stopColor="#3f6df5" />
      </linearGradient>
      <linearGradient id="logoPink" x1="0" y1="1" x2="0" y2="0">
        <stop offset="0" stopColor="#ffd9a8" />
        <stop offset="1" stopColor="#ff35c4" />
      </linearGradient>
    </defs>
    <path d="M16 1h6l11 26h-8z" fill="#2430d8" />
    <path d="M27 20 33 27h-8z" fill="#4a90fc" />
    <path d="M12 1h9l-8 24q-1 2-3 2H1L9 4q1-3 3-3z" fill="url(#logoBlue)" />
    <path d="M29 1h8l-8 24q-1 2-3 2h-8l8-24q1-2 3-2z" fill="url(#logoPink)" />
  </svg>
);

const taskTools = [
  { label: "작업 추가", icon: "taskAdd", w: 124 },
  { label: "하위 작업 추가", icon: "taskSub", w: 128 },
  { label: "삭제", icon: "taskDelete", w: 92 },
  { label: "작업 계층", icon: "calendar", w: 102, off: true },
  { label: "종속 작업", icon: "calendarLink", w: 122, off: true },
  { label: "작업 정보", icon: "calendarCheck", w: 102, on: true },
  { label: "테마", icon: "theme", w: 124 },
];

const FloatingToolbar = () => (
  <FloatBar>
    <FloatSection $w={155}>
      <FloatItem $w={124}>
        <i>
          <Logo />
        </i>
        <span>간트 차트 분석</span>
      </FloatItem>
    </FloatSection>
    <FloatSection $w={103}>
      <FloatItem $w={80}>
        <i>
          <Icon name="ganttOption" size={36} weight={4} />
        </i>
        <span>옵션</span>
      </FloatItem>
    </FloatSection>
    <FloatSection $w={783} $start>
      {taskTools.map((tool) => (
        <FloatItem key={tool.label} $w={tool.w} $on={tool.on} disabled={tool.off}>
          <i>
            <Icon name={tool.icon} size={40} weight={3} cap="round" />
          </i>
          <span>{tool.label}</span>
        </FloatItem>
      ))}
    </FloatSection>
    <FloatSection $w={106} $last>
      <FloatItem $w={80}>
        <i>
          <Icon name="etc" size={42} weight={3} cap="round" />
        </i>
        <span>기타</span>
      </FloatItem>
    </FloatSection>
    <FloatPin aria-label="고정">
      <Icon name="pin" size={20} weight={3} />
    </FloatPin>
    <FloatPin aria-label="크기 조정" $bottom>
      <Icon name="corners" size={20} weight={3} />
    </FloatPin>
  </FloatBar>
);

/* ---------- task info window ---------- */

const InfoPanel = styled.section`
  position: absolute;
  left: 1196px;
  top: 233px;
  width: 539px;
  height: 850px;
  border-radius: 14px;
  background-color: #fff;
  box-shadow: 0 4px 12px rgba(0, 0, 0, 0.14);
  font-size: 27px;
  color: #000;
`;

const InfoTitle = styled.h2`
  display: flex;
  align-items: center;
  justify-content: space-between;
  height: 64px;
  margin: 0 0 16px;
  padding: 2px 20px 0 30px;
  border-bottom: 2px solid #efeff1;
  font-size: 28px;
  font-weight: normal;

  button {
    color: #333;
  }
`;

const Field = styled.div`
  display: flex;
  align-items: center;
  justify-content: space-between;
  height: 80px;
  padding: 0 31px 0 33px;
`;

const FieldBox = styled.div`
  display: flex;
  align-items: center;
  width: 200px;
  height: 48px;
  padding: 0 10px 0 ${({ $pad }) => $pad || 14}px;
  border: 2px solid ${({ $dark }) => ($dark ? "#dcdcdf" : "#eeeef0")};
  border-radius: ${({ $dark }) => ($dark ? 6 : 10)}px;
  font-size: 26px;
  color: #111;

  input, select {
    flex: 1;
    min-width: 0;
    width: 0;
  }

  select {
    font-size: 28px;
  }
`;

const Badge = styled.span`
  display: flex;
  align-items: center;
  justify-content: center;
  width: 32px;
  height: 32px;
  margin-right: 12px;
  border-radius: 50%;
  background-color: #e23022;
  color: #fff;
  font-size: 22px;
`;

const Stepper = styled.span`
  display: flex;
  flex-direction: column;
  gap: 11px;

  button {
    width: 0;
    height: 0;
    border: 6px solid transparent;
    border-bottom: 8px solid #777;
    border-top: none;
  }

  button:last-child {
    border-top: 8px solid ${({ $min }) => ($min ? "#b8b8b8" : "#777")};
    border-bottom: none;
  }
`;

const CheckRow = styled.label`
  display: flex;
  align-items: center;
  gap: 19px;
  height: 64px;
  padding-left: 34px;
  font-size: 26px;

  input {
    appearance: none;
    width: 28px;
    height: 28px;
    border: 2px solid #dedee1;
    border-radius: 4px;
    background-color: #fff;
  }

  input:checked {
    background-color: #3a80fb;
  }
`;

const NumberField = ({ id, label, initial, min }) => {
  const [value, setValue] = useState(initial);

  function handleStep(step) {
    setValue(String(parseInt(value, 10) + step));
  }

  return (
    <Field>
      <label htmlFor={id}>{label}</label>
      <FieldBox>
        <input id={id} value={value} onChange={(e) => setValue(e.target.value)} />
        <Stepper $min={min}>
          <button aria-label="증가" onClick={() => handleStep(1)} />
          <button aria-label="감소" onClick={() => handleStep(-1)} />
        </Stepper>
      </FieldBox>
    </Field>
  );
};

const DateField = ({ id, label, value }) => (
  <Field>
    <label htmlFor={id}>{label}</label>
    <FieldBox $dark>
      <input id={id} defaultValue={value} />
      <Caret />
    </FieldBox>
  </Field>
);

const TaskInfo = () => (
  <InfoPanel>
    <InfoTitle>
      작업 정보
      <button aria-label="고정">
        <Icon name="pinSolid" size={22} />
      </button>
    </InfoTitle>
    <Field>
      <label htmlFor="task-name">이름:</label>
      <FieldBox $pad={20}>
        <input id="task-name" defaultValue="Project Plan" />
      </FieldBox>
    </Field>
    <Field>
      <label htmlFor="task-priority">우선 순위:</label>
      <FieldBox $pad={10}>
        <Badge>1</Badge>
        <select id="task-priority">
          <option>우선 순위</option>
        </select>
        <Caret />
      </FieldBox>
    </Field>
    <NumberField id="task-progress" label="일정:" initial="0.0%" min />
    <DateField id="task-start" label="시작 날짜:" value="09/04/2021" />
    <DateField id="task-end" label="완료 날짜:" value="12/04/2021" />
    <NumberField id="task-length" label="기간:" initial="2" />
    <NumberField id="task-height" label="행 높이:" initial="62" />
    {["마일스톤", "지연 작업 표시", "중요 기간 표시"].map((label) => (
      <CheckRow key={label}>
        <input type="checkbox" />
        {label}
      </CheckRow>
    ))}
  </InfoPanel>
);

/* ---------- red annotations ---------- */

const MarkFrame = styled.div`
  position: absolute;
  left: ${({ $x }) => $x}px;
  top: ${({ $y }) => $y}px;
  width: ${({ $w }) => $w}px;
  height: ${({ $h }) => $h}px;
  border: 10px solid #ea4025;
  pointer-events: none;
`;

const MarkText = styled.strong`
  position: absolute;
  left: ${({ $x }) => $x}px;
  top: ${({ $y }) => $y}px;
  font: 900 ${({ $size }) => $size}px/80px "Noto Sans CJK KR", sans-serif;
  color: #ea4025;
  white-space: nowrap;
`;

const MarkArrow = styled.svg`
  position: absolute;
  left: 1224px;
  top: 212px;
  pointer-events: none;
`;

/* ---------- scrollbars, palette ---------- */

const ScrollY = styled.div`
  padding: 0 5px 0 5px;
  border-right: 1px solid #ebebee;

  i {
    display: block;
    height: 64%;
    margin-top: 198px;
    border-radius: 10px;
    background-color: #d1d2d4;
  }
`;

const ScrollX = styled.div`
  grid-column: 1 / 3;
  padding: 4px 336px 0 310px;
  border-top: 2px solid #e9e9ef;
  border-bottom: 1px solid #e9e9ef;

  i {
    display: block;
    height: 20px;
    border-radius: 10px;
    background-color: #d1d2d4;
  }
`;

const ScrollCorner = styled.div`
  border: 2px solid #c8c8d2;
  background-color: #ebebf1;
`;

const Palette = styled.div`
  grid-column: 1 / 4;
  display: flex;
  align-items: center;
  gap: 4px;
  padding: 2px 2px 0 19px;
  background-color: #fafafb;

  > button:first-child {
    margin-right: 3px;
  }
`;

const Swatch = styled.button`
  flex: 1;
  height: 28px;
  border-radius: 5px;
  background-color: #${({ $color }) => $color};
`;

const swatches = (
  "b02323 cc2a30 e84560 f7668a f89cb0 377f90 4ba8c2 57c0de 63dbf0 a6f1ff " +
  "f0542c ff7e38 ff963a ffb640 fdc35d ffffff 52b49c 5ecbb2 66dac6 84ecdc " +
  "9a2d62 c84d8c e568a8 f786c4 f0c0dc 5e8a28 75a030 99bc3a b1d04a d1df8c " +
  "2028b0 3340d8 6d41f0 8e6cf8 ab90f8 fcc845 fbda4a f0e84c faf64e ffff80 " +
  "9a4ee0 c44ee8 d46cfc c184ff dba0ff 357f48 479f58 50ac78 62bc88 92d8ac " +
  "e6382c ff4a3c fc6464 ff7a7c ff9088 2642a8 2f56d4 336af4 648cff 8aaef8 " +
  "762e12 963a18 a84224 d05f40 e47858 3c8cdc 469cf8 50b4ff 62ccfc 6ce4ff " +
  "7c4e36 986044 b87552 d88660 f49a6c 8b8078 b2ae9c ccc8b8 e4dccc efebd6 " +
  "1c1c1c 303030 484848 5c5c5c 808080 bcbcbc cccccc d8d8d8 e6e6e6 f6f6f6 ffffff"
).split(" ");

const Editor = () => (
  <Workspace>
    <RulerCorner />
    <TopRuler>
      {range(-1, 15).map((n) => (
        <TopMark key={n}>
          <span>{n * 20}</span>
          <i />
          <i />
          <i />
        </TopMark>
      ))}
    </TopRuler>
    <div />

    <LeftRuler>
      {range(1, 10).map((n) => (
        <LeftMark key={n}>
          <span>{n * 20}</span>
          <i />
          <i />
          <i />
        </LeftMark>
      ))}
    </LeftRuler>
    <Canvas>
      <Sheet>
        <SheetTitle>Student Data Base Management</SheetTitle>
      </Sheet>
      <Gantt />
      <SelectionFrame width="1496" height="777" aria-hidden="true">
        <rect x="10" y="10" width="1476" height="756" fill="none" strokeDasharray="10 6" />
        {handles.map(([x, y]) => (
          <rect key={`${x}-${y}`} x={x - 8} y={y - 8} width="16" height="16" />
        ))}
      </SelectionFrame>
      <FloatingToolbar />
      <TaskInfo />
      <MarkFrame $x={203} $y={247} $w={314} $h={664} />
      <MarkFrame $x={1166} $y={67} $w={127} $h={151} />
      <MarkFrame $x={1210} $y={399} $w={519} $h={678} />
      <MarkArrow width="120" height="190" viewBox="0 0 120 190" aria-hidden="true">
        <path d="M8 2 79 142" stroke="#ea4025" strokeWidth="11" />
        <path d="M56 152 101 127 102 186z" fill="#ea4025" />
      </MarkArrow>
      <MarkText $x={122} $y={926} $size={66}>
        1: 주요 단계 입력
      </MarkText>
      <MarkText $x={1298} $y={6} $size={72}>
        2
      </MarkText>
      <MarkText $x={1336} $y={308} $size={72}>
        3
      </MarkText>
    </Canvas>
    <ScrollY>
      <i />
    </ScrollY>

    <ScrollX>
      <i />
    </ScrollX>
    <ScrollCorner />

    <Palette>
      <IconButton aria-label="채우기 색" $gap={1}>
        <Icon name="bucket" size={30} weight={3} />
        <Caret />
      </IconButton>
      {swatches.map((color, i) => (
        <Swatch key={i} $color={color} aria-label={`#${color}`} />
      ))}
    </Palette>
  </Workspace>
);

/* ---------- right rail ---------- */

const Rail = styled.aside`
  display: flex;
  flex-direction: column;
  align-items: center;
  flex: none;
  width: 62px;
  padding-left: 8px;
  border-left: 1px solid #e9e9ef;
`;

const RailButton = styled.button`
  display: flex;
  align-items: center;
  justify-content: center;
  width: 62px;
  height: ${({ $h }) => $h || 90}px;
  color: ${({ $on }) => ($on ? "#fff" : "#444")};

  ${({ $on }) =>
    $on &&
    css`
      margin-left: -8px;
      padding-left: 10px;
      background-color: #3a80fb;
    `}
`;

const RightRail = () => (
  <Rail>
    <RailButton $h={64} aria-label="패널 펼치기">
      <Icon name="collapse" size={28} />
    </RailButton>
    <RailButton $h={70} $on aria-label="채우기">
      <Icon name="bucket" size={38} weight={2} />
    </RailButton>
    <RailButton $h={108} aria-label="페이지 정보">
      <Icon name="note" size={40} weight={4} />
    </RailButton>
    <RailButton $h={74} aria-label="프레젠테이션">
      <Icon name="board" size={38} weight={4} />
    </RailButton>
    <RailButton $h={104} aria-label="도움말">
      <Icon name="help" size={38} weight={3} />
    </RailButton>
    <Spacer />
    <RailButton $h={64} aria-label="설정">
      <Icon name="gear" size={38} weight={3} />
    </RailButton>
  </Rail>
);

/* ---------- status bar ---------- */

const StatusBar = styled.footer`
  position: relative;
  display: flex;
  align-items: center;
  flex: none;
  height: 62px;
  padding: 2px 7px 0 36px;
  background: linear-gradient(#f1f2f7, #e6e7eb 55%, #d7d7db);
  font-size: 25px;

  ${Divider} {
    height: 44px;
    width: 1px;
    background-color: #d3d4d9;
  }
`;

const StatusCell = styled.div`
  display: flex;
  align-items: center;
  gap: ${({ $gap }) => $gap || 10}px;
  padding: 0 ${({ $px }) => $px || 18}px;
  white-space: nowrap;
`;

const PlayTools = styled.div`
  display: flex;
  align-items: center;
  gap: 24px;
`;

const PageSelect = styled.label`
  display: flex;
  align-items: center;
  width: 257px;
  padding: 0 25px 0 33px;
  font-size: 26px;

  select {
    flex: 1;
  }
`;

const PageTab = styled.a`
  padding: 0 27px 0 26px;
  color: #3a80fb;
  font-size: 27px;
  font-weight: 600;
  text-decoration: none;
`;

const ZoomSlider = styled.input`
  appearance: none;
  width: 192px;
  height: 7px;
  border-radius: 4px;
  background: linear-gradient(90deg, #444 40px, #f1f1f4 40px);

  &::-webkit-slider-thumb {
    appearance: none;
    width: 24px;
    height: 24px;
    border: 4px solid #444;
    border-radius: 50%;
    background-color: #fff;
  }
`;

const Tooltip = styled.div`
  position: absolute;
  right: -24px;
  top: -21px;
  width: 120px;
  height: 54px;
  padding-left: 26px;
  border: 2px solid #333438;
  border-radius: 8px;
  background-color: #5b5c60;
  color: #eee;
  font-size: 27px;
  line-height: 50px;
  white-space: nowrap;

  &::after {
    content: "";
    position: absolute;
    left: 60px;
    top: 51px;
    border: 17px solid transparent;
    border-top: 16px solid #5b5c60;
    border-bottom: none;
  }
`;

const Status = () => {
  const [zoom, setZoom] = useState(18);

  return (
    <StatusBar>
      <IconButton aria-label="페이지 보기" $color="#222">
        <Icon name="pageView" size={34} />
      </IconButton>
      <StatusCell $px={12} />
      <Divider />
      <PageSelect>
        <select aria-label="페이지">
          <option>Page-1</option>
        </select>
        <Caret />
      </PageSelect>
      <Divider />
      <StatusCell $px={29}>
        <IconButton aria-label="페이지 추가" $color="#222">
          <Icon name="plus" size={26} weight={2} />
        </IconButton>
      </StatusCell>
      <Divider />
      <PageTab href="#">Page-1</PageTab>
      <Divider />
      <Spacer />
      <Divider />
      <StatusCell>형태 수: 2</StatusCell>
      <Divider />
      <StatusCell>모양 ID: 101</StatusCell>
      <Divider />
      <StatusCell $px={22} $gap={32}>
        <IconButton aria-label="레이어" $color="#222">
          <Icon name="layers" size={36} />
          <Caret />
        </IconButton>
        <PlayTools>
          <IconButton $color="#222" $gap={18}>
            <Icon name="focus" size={32} />
            집중
          </IconButton>
          <IconButton aria-label="재생" $color="#222">
            <Icon name="play" size={36} />
          </IconButton>
        </PlayTools>
      </StatusCell>
      <Divider />
      <StatusCell $px={20} $gap={20}>
        <IconButton aria-label="축소">
          <Icon name="minus" size={26} weight={2} />
        </IconButton>
        <ZoomSlider
          type="range"
          aria-label="확대 비율"
          value={zoom}
          onChange={(e) => setZoom(Number(e.target.value))}
        />
        <IconButton aria-label="확대">
          <Icon name="plus" size={26} weight={2} />
        </IconButton>
      </StatusCell>
      <StatusCell $px={22} $gap={24}>
        76%
        <Caret />
      </StatusCell>
      <Divider />
      <StatusCell $px={27} $gap={30}>
        <IconButton aria-label="창에 맞춤" $color="#222">
          <Icon name="fit" size={32} />
        </IconButton>
        <IconButton aria-label="전체 화면" $color="#222">
          <Icon name="fit" size={32} />
        </IconButton>
      </StatusCell>
      <Tooltip role="tooltip">다운로드</Tooltip>
    </StatusBar>
  );
};

const App = () => (
  <>
    <GlobalStyle />
    <Window>
      <Header />
      <Ribbon />
      <Main>
        <SymbolPanel />
        <Editor />
        <RightRail />
      </Main>
      <Status />
    </Window>
  </>
);

export default App;
